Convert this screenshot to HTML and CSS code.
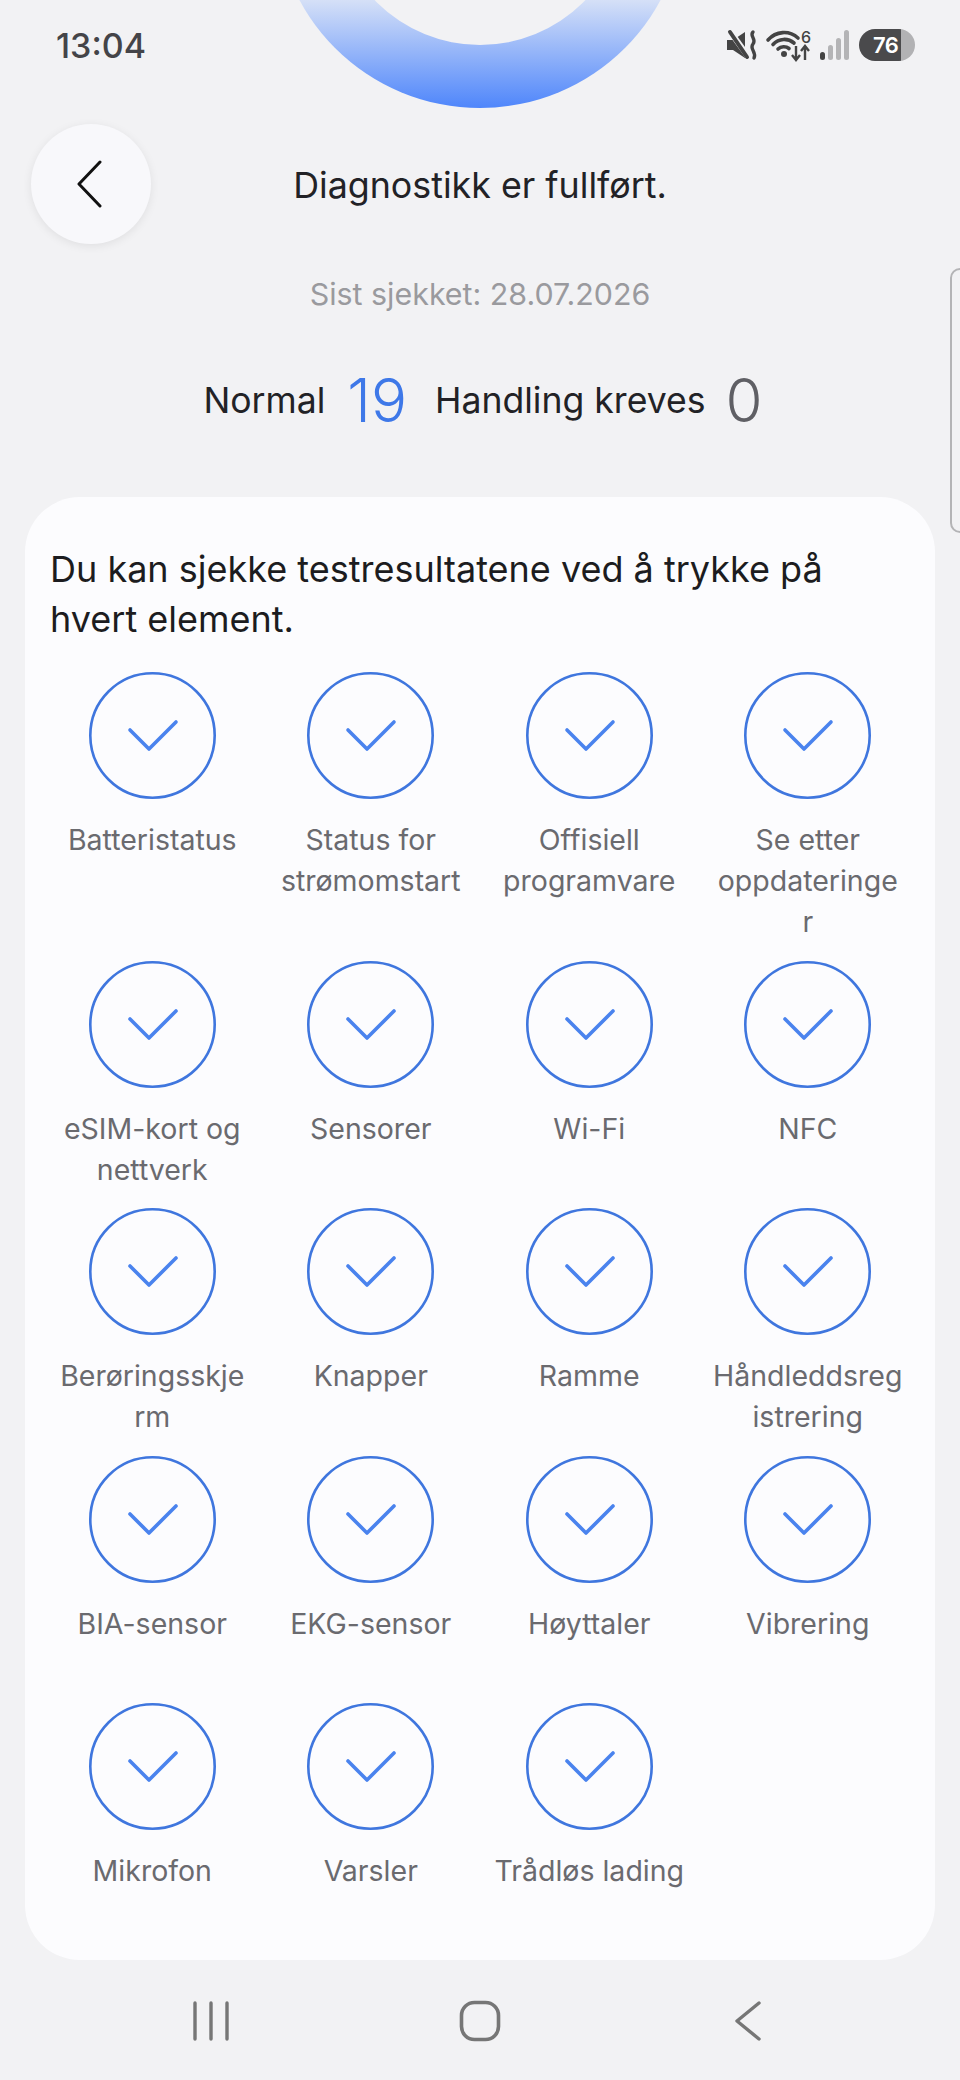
FILE: index.html
```html
<!DOCTYPE html>
<html lang="nb">
<head>
    <meta charset="UTF-8">
    <title>Diagnostikk</title>

    <link rel="stylesheet" href="styles.css">

</head>
<body>

<svg class="defs" width="0" height="0">
    <symbol id="ok" viewBox="0 0 127 127">
        <circle cx="63.5" cy="63.5" r="62.2" fill="none" stroke="#3f76de" stroke-width="2.6"/>
        <path d="M41 58 L60 77 L87 50" fill="none" stroke="#4a83ee" stroke-width="3.6" stroke-linecap="round" stroke-linejoin="round"/>
    </symbol>
</svg>

<div class="ring"></div>
<div class="edge-tab"></div>

<div id="status">
    <span class="time">13:04</span>
    <div class="status-icons">
        <svg class="ic-mute" width="32" height="30" viewBox="0 0 32 30">
            <path d="M1 10 H7 L19 2 V28 L7 20 H1 Z" fill="#444"/>
            <path d="M3 0 L24 29" stroke="#f2f2f4" stroke-width="6"/>
            <path d="M4 2 L21 27" stroke="#444" stroke-width="4" stroke-linecap="round"/>
            <path d="M27 2 C23 6 31 9 27 14 C23 19 31 22 28 28" fill="none" stroke="#444" stroke-width="3.400" stroke-linecap="round"/>
        </svg>
        <svg class="ic-wifi" width="46" height="32" viewBox="0 0 46 32">
            <path d="M3 11 C11 2 24 1 33 9" fill="none" stroke="#444" stroke-width="3.600" stroke-linecap="round"/>
            <path d="M8 15.500 C14 9 23 9 29 14" fill="none" stroke="#444" stroke-width="3.600" stroke-linecap="round"/>
            <path d="M13 20 C16 17 21 17 24 19.500" fill="none" stroke="#444" stroke-width="3.600" stroke-linecap="round"/>
            <circle cx="19" cy="25" r="3" fill="#444"/>
            <text x="36" y="14" class="wifi-six">6</text>
            <path d="M31 17 V30 M27 26 L31 31 L35 26" fill="none" stroke="#444" stroke-width="2.400"/>
            <path d="M40 31 V18 M36 22 L40 17 L44 22" fill="none" stroke="#444" stroke-width="2.400"/>
        </svg>
        <div class="signal">
            <i class="s1"></i><i class="s2"></i><i class="s3"></i><i class="s4"></i>
        </div>
        <div class="battery"><span>76</span></div>
    </div>
</div>

<div id="head">
    <button class="back">
        <svg width="25" height="48" viewBox="0 0 25 48">
            <path d="M23 2 L2 24 L23 46" fill="none" stroke="#111" stroke-width="3" stroke-linecap="round" stroke-linejoin="round"/>
        </svg>
    </button>
    <h1>Diagnostikk er fullført.</h1>
</div>

<p class="checked">Sist sjekket: 28.07.2026</p>

<div class="summary">
    <span>Normal</span>
    <b class="num blue">19</b>
    <span class="second">Handling kreves</span>
    <b class="num grey">0</b>
</div>

<div class="card">
    <p class="intro">Du kan sjekke testresultatene ved å trykke på hvert element.</p>
    <ul class="tests">
        <li><svg><use href="#ok"/></svg><span>Batteristatus</span></li>
        <li><svg><use href="#ok"/></svg><span>Status for strømomstart</span></li>
        <li><svg><use href="#ok"/></svg><span>Offisiell programvare</span></li>
        <li><svg><use href="#ok"/></svg><span>Se etter oppdateringe<br>r</span></li>
        <li><svg><use href="#ok"/></svg><span>eSIM-kort og nettverk</span></li>
        <li><svg><use href="#ok"/></svg><span>Sensorer</span></li>
        <li><svg><use href="#ok"/></svg><span>Wi-Fi</span></li>
        <li><svg><use href="#ok"/></svg><span>NFC</span></li>
        <li><svg><use href="#ok"/></svg><span>Berøringsskje<br>rm</span></li>
        <li><svg><use href="#ok"/></svg><span>Knapper</span></li>
        <li><svg><use href="#ok"/></svg><span>Ramme</span></li>
        <li><svg><use href="#ok"/></svg><span>Håndleddsreg<br>istrering</span></li>
        <li><svg><use href="#ok"/></svg><span>BIA-sensor</span></li>
        <li><svg><use href="#ok"/></svg><span>EKG-sensor</span></li>
        <li><svg><use href="#ok"/></svg><span>Høyttaler</span></li>
        <li><svg><use href="#ok"/></svg><span>Vibrering</span></li>
        <li><svg><use href="#ok"/></svg><span>Mikrofon</span></li>
        <li><svg><use href="#ok"/></svg><span>Varsler</span></li>
        <li><svg><use href="#ok"/></svg><span>Trådløs lading</span></li>
    </ul>
</div>

<div id="nav">
    <svg width="38" height="40" viewBox="0 0 38 40">
        <path d="M3 2 V38 M19 2 V38 M35 2 V38" stroke="#767676" stroke-width="3.400" stroke-linecap="round"/>
    </svg>
    <svg width="42" height="42" viewBox="0 0 42 42">
        <rect x="2.500" y="2.500" width="37" height="37" rx="13" fill="none" stroke="#767676" stroke-width="3.600"/>
    </svg>
    <svg class="nav-back" width="28" height="40" viewBox="0 0 28 40">
        <path d="M25 2 L3 20 L25 38" fill="none" stroke="#767676" stroke-width="3.400" stroke-linecap="round" stroke-linejoin="round"/>
    </svg>
</div>

</body>
</html>
```

FILE: styles.css
```css
* {
    margin: 0;
    padding: 0;
    list-style: none;
    border: none;
    box-sizing: border-box;
}

body {
    position: relative;
    width: 960px;
    height: 2080px;
    overflow: hidden;
    background-color: #f2f2f4;
    font-family: Inter, "Noto Sans", sans-serif;
    color: #222226;
}

.defs {
    position: absolute;
}

/* the blue ring hanging from the top */
.ring {
    position: absolute;
    left: 275px;
    top: -302px;
    width: 410px;
    height: 410px;
    border-radius: 50%;
    background: linear-gradient(to bottom, #f2f2f4 70%, #d5e0f7 73.7%, #4f86fb 100%);
}

.ring::after {
    content: "";
    position: absolute;
    left: 60px;
    top: 60px;
    width: 290px;
    height: 287px;
    border-radius: 50%;
    background-color: #f2f2f4;
}

.edge-tab {
    position: absolute;
    left: 950px;
    top: 268px;
    width: 20px;
    height: 265px;
    border: 2.500px solid #b4b4b6;
    border-radius: 12px;
}

#status {
    position: relative;
    display: flex;
    justify-content: space-between;
    align-items: center;
    height: 90px;
    padding: 0 45px 0 56px;
}

.time {
    font-size: 34px;
    font-weight: 500;
    color: #444448;
}

.status-icons {
    display: flex;
    align-items: center;
}

.status-icons svg {
    overflow: visible;
}

.ic-wifi {
    margin-left: 7px;
}

.wifi-six {
    font-family: Inter, sans-serif;
    font-size: 16px;
    font-weight: 500;
    fill: #444;
}

.signal {
    display: flex;
    align-items: flex-end;
    gap: 3px;
    height: 30px;
    margin-left: 9px;
}

.signal i {
    display: block;
    width: 5px;
    border-radius: 2.500px;
    background-color: #b4b4b6;
}

.signal .s1 { height: 8px; background-color: #444; }
.signal .s2 { height: 15px; }
.signal .s3 { height: 22px; }
.signal .s4 { height: 30px; }

.battery {
    width: 56px;
    height: 32px;
    margin-left: 10px;
    border-radius: 16px;
    background: linear-gradient(to right, #4a4a4c 75%, #b2b2b4 75%);
    color: #fff;
    font-size: 22px;
    font-weight: 600;
    line-height: 32px;
    padding-left: 14px;
    letter-spacing: -0.5px;
}

#head {
    display: grid;
    grid-template-columns: 150px 1fr 150px;
    align-items: center;
    margin-top: 34px;
    height: 120px;
}

.back {
    display: flex;
    align-items: center;
    justify-content: center;
    width: 120px;
    height: 120px;
    margin-left: 31px;
    padding-right: 3px;
    border-radius: 50%;
    background-color: #f8f8fb;
    box-shadow: 0 2px 10px rgba(0, 0, 0, 0.08);
}

h1 {
    padding-top: 2px;
    font-size: 35.800px;
    font-weight: 400;
    text-align: center;
}

.checked {
    margin-top: 30px;
    font-size: 30.400px;
    line-height: 40px;
    color: #9a9a9e;
    text-align: center;
}

.summary {
    display: flex;
    justify-content: center;
    align-items: center;
    height: 80px;
    margin-top: 46px;
    padding-left: 6px;
    font-size: 35.600px;
}

.num {
    font-size: 60px;
    font-weight: 300;
    margin-left: 22px;
}

.blue {
    color: #3e78e8;
}

.grey {
    margin-left: 20px;
    color: #5f5f64;
}

.second {
    margin-left: 28px;
}

.card {
    width: 910px;
    margin: 57px 0 0 25px;
    padding: 47px 18px 28px;
    border-radius: 55px;
    background-color: #fcfcfe;
}

.intro {
    padding: 0 40px 0 7px;
    font-size: 36px;
    line-height: 50px;
    color: #1c1c20;
}

.tests {
    display: grid;
    grid-template-columns: repeat(4, 1fr);
    row-gap: 18.600px;
    margin-top: 28px;
}

.tests li {
    display: flex;
    flex-direction: column;
    align-items: center;
}

.tests svg {
    width: 127px;
    height: 127px;
}

.tests span {
    width: 100%;
    min-height: 82px;
    padding: 0 10px;
    margin-top: 20px;
    font-size: 28.500px;
    line-height: 41px;
    color: #6a6a6f;
    text-align: center;
}

#nav {
    position: absolute;
    left: 192px;
    top: 2000px;
    display: flex;
    align-items: center;
    gap: 229px;
}

.nav-back {
    margin-left: 4px;
}
```
